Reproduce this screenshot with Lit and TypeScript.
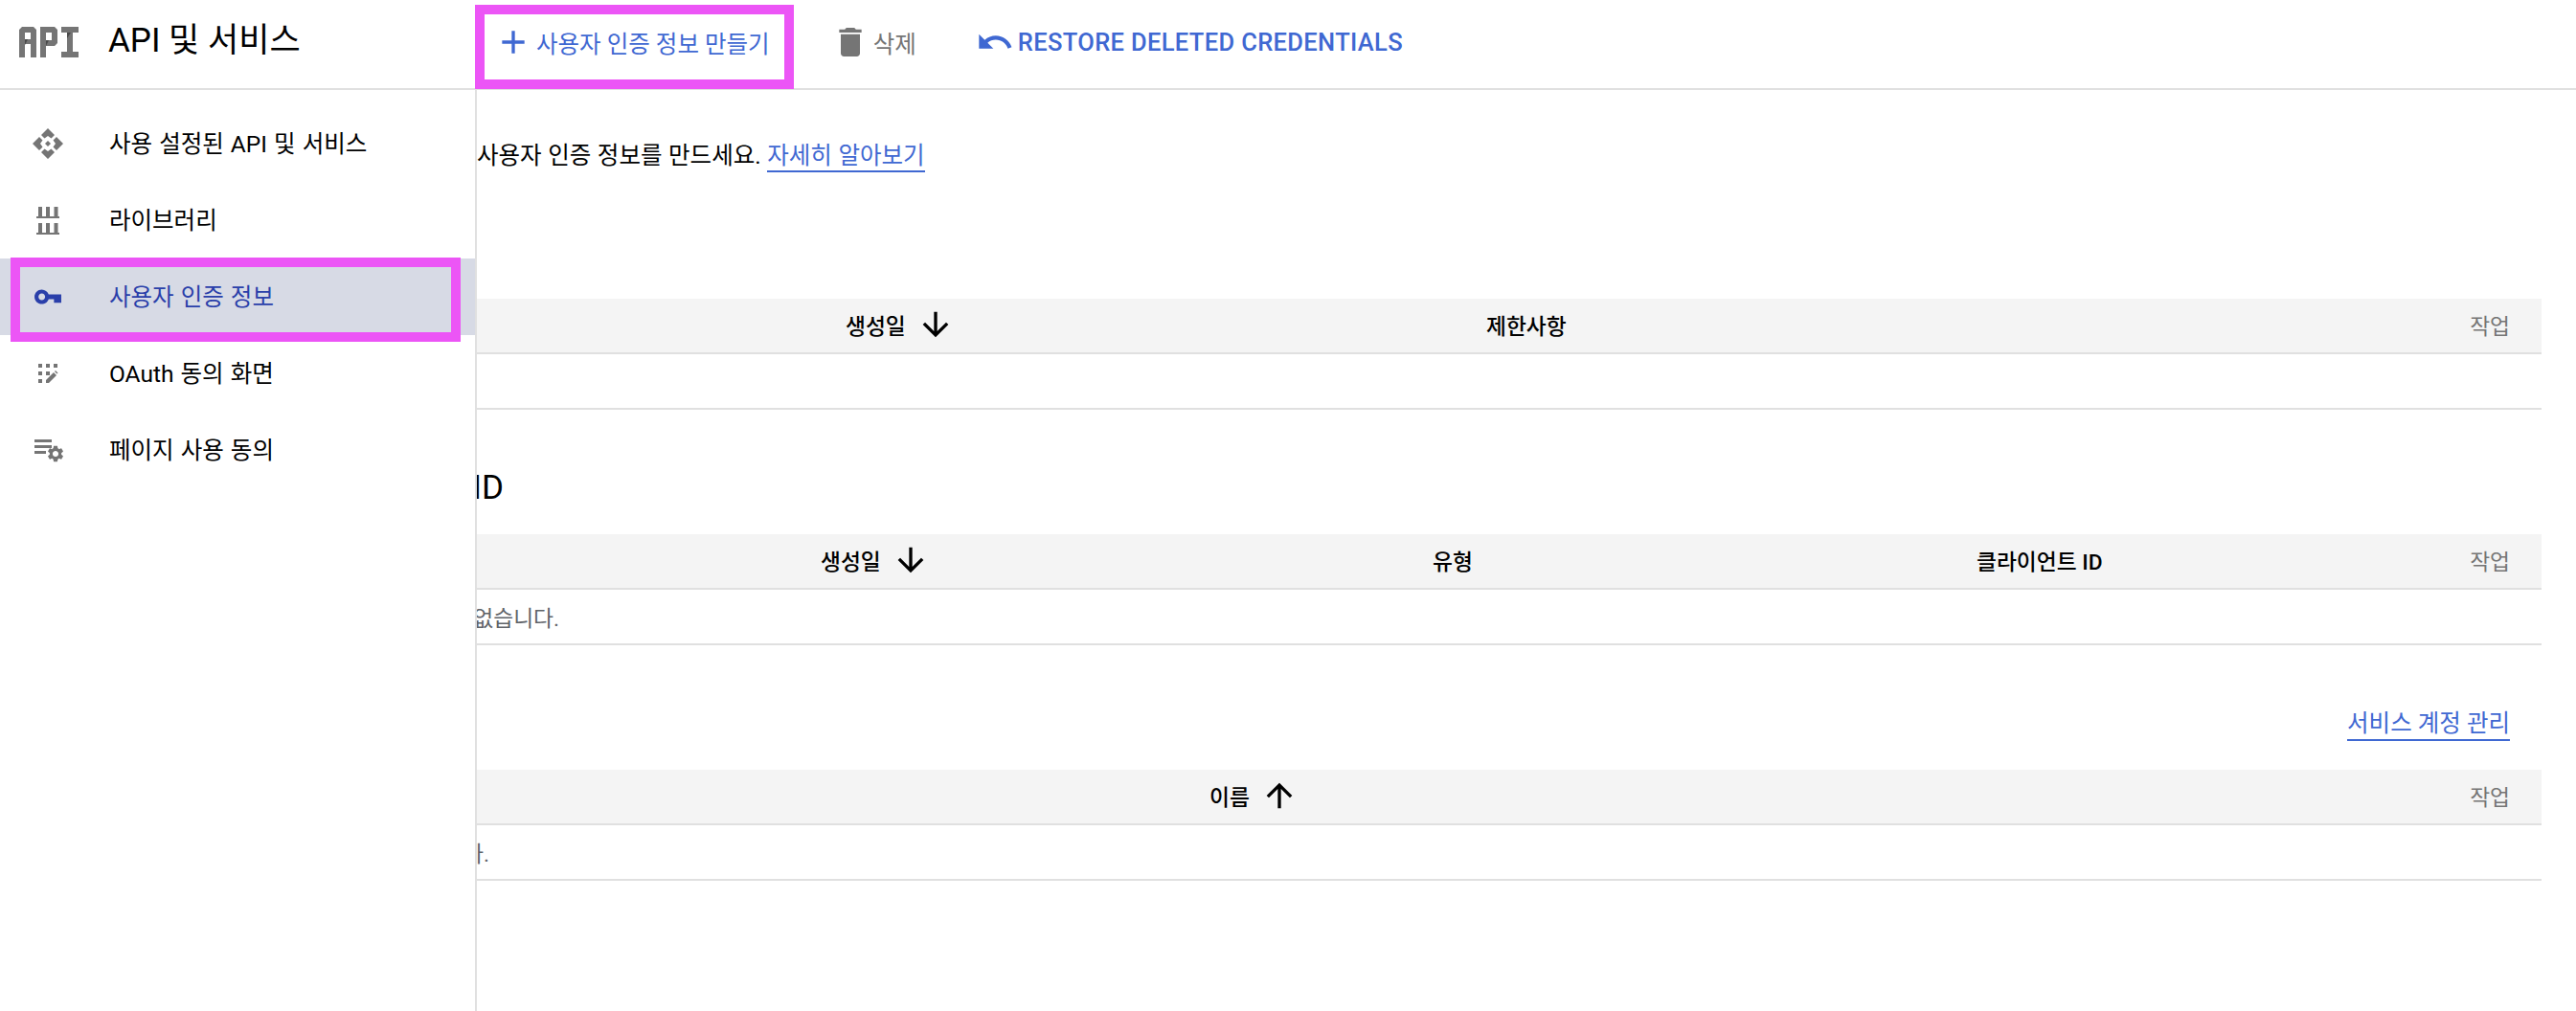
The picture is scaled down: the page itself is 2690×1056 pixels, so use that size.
import { LitElement, html, css, svg } from "lit";
import { customElement } from "lit/decorators.js";

const gear = "M19.14 12.94c.04-.3.06-.61.06-.94 0-.32-.02-.64-.07-.94l2.03-1.58c.18-.14.23-.41.12-.61l-1.92-3.32c-.12-.22-.37-.29-.59-.22l-2.39.96c-.5-.38-1.03-.7-1.62-.94l-.36-2.54c-.04-.24-.24-.41-.48-.41h-3.84c-.24 0-.43.17-.47.41l-.36 2.54c-.59.24-1.13.57-1.62.94l-2.39-.96c-.22-.08-.47 0-.59.22L2.74 8.87c-.12.21-.08.47.12.61l2.03 1.58c-.05.3-.09.63-.09.94s.02.64.07.94l-2.03 1.58c-.18.14-.23.41-.12.61l1.92 3.32c.12.22.37.29.59.22l2.39-.96c.5.38 1.03.7 1.62.94l.36 2.54c.05.24.24.41.48.41h3.84c.24 0 .44-.17.47-.41l.36-2.54c.59-.24 1.13-.56 1.62-.94l2.39.96c.22.08.47 0 .59-.22l1.92-3.32c.12-.22.07-.47-.12-.61l-2.01-1.58zM12 15.6c-1.98 0-3.6-1.62-3.6-3.6s1.62-3.6 3.6-3.6 3.6 1.62 3.6 3.6-1.62 3.6-3.6 3.6z";

const navIcons = {
  api: svg`<svg class="nav-ic" viewBox="0 0 40 40" fill="currentColor">
    ${[0, 90, 180, 270].map((r) => svg`<path transform="rotate(${r} 20 20)" d="M20 4l7 7-3.5 3.5L20 12l-3.5 2.5L13 11z"/>`)}
    <path d="M20 17l3 3-3 3-3-3z"/></svg>`,
  lib: svg`<svg class="nav-ic" viewBox="0 0 40 40" fill="currentColor">
    <path d="M10 6h4v10h-4zM18 6h4v10h-4zM26.500 6h4v10h-4zM8 16h24v2H8zM10 23h4v10h-4zM18 23h4v10h-4zM26.500 23h4v10h-4zM8 33h24v2H8z"/></svg>`,
  key: svg`<svg class="nav-ic" viewBox="0 0 40 40" fill="currentColor">
    <g transform="translate(20 20) scale(1.27) translate(-12 -12)"><path fill-rule="evenodd" d="M12.650 10C11.830 7.670 9.610 6 7 6c-3.310 0-6 2.690-6 6s2.690 6 6 6c2.610 0 4.830-1.670 5.650-4H17v3h6v-7H12.650zM7 14.750c-1.520 0-2.750-1.230-2.750-2.750S5.480 9.250 7 9.250 9.750 10.480 9.750 12 8.520 14.750 7 14.750z"/></g></svg>`,
  oauth: svg`<svg class="nav-ic" viewBox="0 0 40 40" fill="currentColor">
    <path d="M10 10h4v4h-4zM18 10h4v4h-4zM26 10h4v4h-4zM10 18h4v4h-4zM18 18h4v4h-4zM10 26h4v4h-4z"/>
    <path d="M18 30v-3l8-8 3 3-8 8zM27 18l1-1 2.500 2.500-1 1z"/></svg>`,
  page: svg`<svg class="nav-ic" viewBox="0 0 40 40" fill="currentColor">
    <path d="M6 9h18v3H6zM6 15h18v3H6zM6 21h12v3H6z"/>
    <path transform="translate(28 24) scale(.85) translate(-12 -12)" d="${gear}"/></svg>`,
};

const arrowDown = svg`<svg class="sort" viewBox="0 0 24 24" fill="currentColor"><path d="M20 12l-1.410-1.410L13 16.170V4h-2v12.170l-5.580-5.590L4 12l8 8 8-8z"/></svg>`;
const arrowUp = svg`<svg class="sort" viewBox="0 0 24 24" fill="currentColor"><path d="M4 12l1.410 1.410L11 7.830V20h2V7.830l5.580 5.590L20 12l-8-8-8 8z"/></svg>`;

@customElement("app-root")
export class AppRoot extends LitElement {
  static styles = css`
    :host {
      display: block;
      width: 100%;
      height: 100vh;
      overflow: hidden;
      background: #fff;
      color: #000;
      font-family: Roboto, "Noto Sans CJK KR", sans-serif;
      font-size: 24.5px;
    }
    .shell { display: flex; flex-direction: column; height: 100%; }
    header {
      display: flex;
      flex: none;
      height: 92px;
      border-bottom: 2px solid #e0e0e0;
    }
    .brand {
      width: 498px;
      flex: none;
      box-sizing: border-box;
      display: flex;
      align-items: center;
      padding-left: 20px;
      gap: 31px;
    }
    .logo { width: 62px; height: 32px; flex: none; margin-top: -4px; }
    .title { font-size: 35px; line-height: 44px; margin-top: -6px; white-space: nowrap; }
    .toolbar { display: flex; align-items: stretch; padding-left: 18px; gap: 64px; }
    .tool {
      position: relative;
      display: flex;
      align-items: center;
      gap: 4px;
      color: #3f68d2;
      white-space: nowrap;
      padding-bottom: 4px;
    }
    .tool.gray { color: #757575; }
    .tool.caps { font-weight: 500; font-size: 25.5px; letter-spacing: 0.35px; margin-left: -2px; }
    .tool svg { width: 40px; height: 40px; flex: none; }
    .mark {
      position: absolute;
      box-sizing: border-box;
      border: 10px solid #ec55f6;
      pointer-events: none;
      z-index: 3;
    }
    .mark.tb { left: -20px; right: -25px; top: 5px; bottom: -1px; }
    .mark.nv { left: 11px; right: 15px; top: -1px; bottom: -7px; }
    .body { display: flex; flex: 1; min-height: 0; }
    nav {
      width: 498px;
      flex: none;
      box-sizing: border-box;
      border-right: 2px solid #e0e0e0;
      padding-top: 16px;
    }
    .item {
      position: relative;
      display: flex;
      align-items: center;
      height: 80px;
      padding-left: 30px;
      gap: 44px;
      color: #757575;
    }
    .item .label { color: #000; white-space: nowrap; word-spacing: 1px; padding-bottom: 3px; }
    .item.on { background: #d7dae5; color: #2a3faa; }
    .item.on .label { color: #2a3faa; }
    .nav-ic { width: 40px; height: 40px; flex: none; overflow: visible; }
    main {
      flex: 1;
      min-width: 0;
      overflow: hidden;
      padding: 53px 36px 0 0;
    }
    a { color: #3f68d2; text-decoration: none; border-bottom: 2px solid #3f68d2; padding-bottom: 1px; }
    .intro { line-height: 32px; white-space: nowrap; margin: 0 0 133px; word-spacing: 0.5px; }
    .thead, .trow { border-bottom: 2px solid #e0e0e0; }
    .thead {
      display: grid;
      align-items: center;
      height: 56px;
      background: #f4f4f4;
      font-size: 22.75px;
      font-weight: 500;
      padding-right: 33px;
    }
    .t1 { grid-template-columns: 385px 669px 1fr auto; }
    .t2 { grid-template-columns: 359px 639px 568px 1fr auto; }
    .t3 { grid-template-columns: 765px 1fr auto; }
    .th { display: flex; align-items: center; gap: 12px; white-space: nowrap; }
    .th span { margin-top: -2px; }
    .sort { width: 40px; height: 40px; flex: none; margin-top: -2px; margin-left: -1px; }
    .act { color: #757575; font-weight: 400; }
    .trow {
      display: flex;
      align-items: center;
      justify-content: flex-start;
      height: 56px;
      font-size: 22.75px;
      color: #5f6368;
    }
    .clip {
      display: flex;
      justify-content: flex-end;
      white-space: nowrap;
    }
    .clip.a { width: 86px; }
    .clip.b { width: 13px; }
    h2 {
      margin: 58px 0 24px;
      font-weight: 400;
      font-size: 35px;
      line-height: 48px;
      display: flex;
      justify-content: flex-end;
      white-space: nowrap;
      width: 28px;
    }
    .more {
      display: flex;
      justify-content: flex-end;
      align-items: center;
      height: 40px;
      margin: 61px 0 29px;
      padding-right: 33px;
      white-space: nowrap;
    }
  `;

  private item(icon: unknown, label: string, on = false) {
    return html`<div class="item ${on ? "on" : ""}">
      ${icon}<span class="label">${label}</span>
      ${on ? html`<div class="mark nv"></div>` : ""}
    </div>`;
  }

  render() {
    return html`<div class="shell">
      <header>
        <div class="brand">
          <svg class="logo" viewBox="0 0 62 32">
            <g fill="#757575" fill-rule="evenodd">
              <path d="M3 0h12l3 3v29h-6V18H6v14H0V3zM6 6v7h6V6z"/>
              <path d="M22 0h15l3 3v14l-3 3h-9v12h-6zM28 6v8h6V6z"/>
              <path d="M44 0h18v6h-6v20h6v6H44v-6h6V6h-6z"/>
            </g>
            <g fill="#4a4a4a">
              <path d="M6 13h3l-3 6zM28 14h3l-3 6zM50 6h4l-4 6z"/>
            </g>
          </svg>
          <div class="title">API 및 서비스</div>
        </div>
        <div class="toolbar">
          <div class="tool">
            <svg viewBox="0 0 24 24" fill="currentColor"><path d="M19 13h-6v6h-2v-6H5v-2h6V5h2v6h6v2z"/></svg>
            <span>사용자 인증 정보 만들기</span>
            <div class="mark tb"></div>
          </div>
          <div class="tool gray">
            <svg viewBox="0 0 24 24" fill="currentColor"><path d="M6 19c0 1.100.9 2 2 2h8c1.100 0 2-.9 2-2V7H6v12zM19 4h-3.500l-1-1h-5l-1 1H5v2h14V4z"/></svg>
            <span>삭제</span>
          </div>
          <div class="tool caps">
            <svg viewBox="0 0 24 24" fill="currentColor"><path d="M12.500 8c-2.650 0-5.050.99-6.900 2.600L2 7v9h9l-3.620-3.620c1.390-1.160 3.160-1.880 5.120-1.880 3.540 0 6.550 2.310 7.600 5.500l2.370-.78C21.080 11.030 17.150 8 12.500 8z"/></svg>
            <span>RESTORE DELETED CREDENTIALS</span>
          </div>
        </div>
      </header>
      <div class="body">
        <nav>
          ${this.item(navIcons.api, "사용 설정된 API 및 서비스")}
          ${this.item(navIcons.lib, "라이브러리")}
          ${this.item(navIcons.key, "사용자 인증 정보", true)}
          ${this.item(navIcons.oauth, "OAuth 동의 화면")}
          ${this.item(navIcons.page, "페이지 사용 동의")}
        </nav>
        <main>
          <p class="intro">사용자 인증 정보를 만드세요. <a>자세히 알아보기</a></p>

          <div class="thead t1">
            <i></i>
            <div class="th"><span>생성일</span> ${arrowDown}</div>
            <div class="th"><span>제한사항</span></div>
            <div class="th act"><span>작업</span></div>
          </div>
          <div class="trow"></div>

          <h2>ID</h2>
          <div class="thead t2">
            <i></i>
            <div class="th"><span>생성일</span> ${arrowDown}</div>
            <div class="th"><span>유형</span></div>
            <div class="th"><span>클라이언트 ID</span></div>
            <div class="th act"><span>작업</span></div>
          </div>
          <div class="trow"><div class="clip a">없습니다.</div></div>

          <div class="more"><a>서비스 계정 관리</a></div>
          <div class="thead t3">
            <i></i>
            <div class="th"><span>이름</span> ${arrowUp}</div>
            <div class="th act"><span>작업</span></div>
          </div>
          <div class="trow"><div class="clip b">다.</div></div>
        </main>
      </div>
    </div>`;
  }
}
